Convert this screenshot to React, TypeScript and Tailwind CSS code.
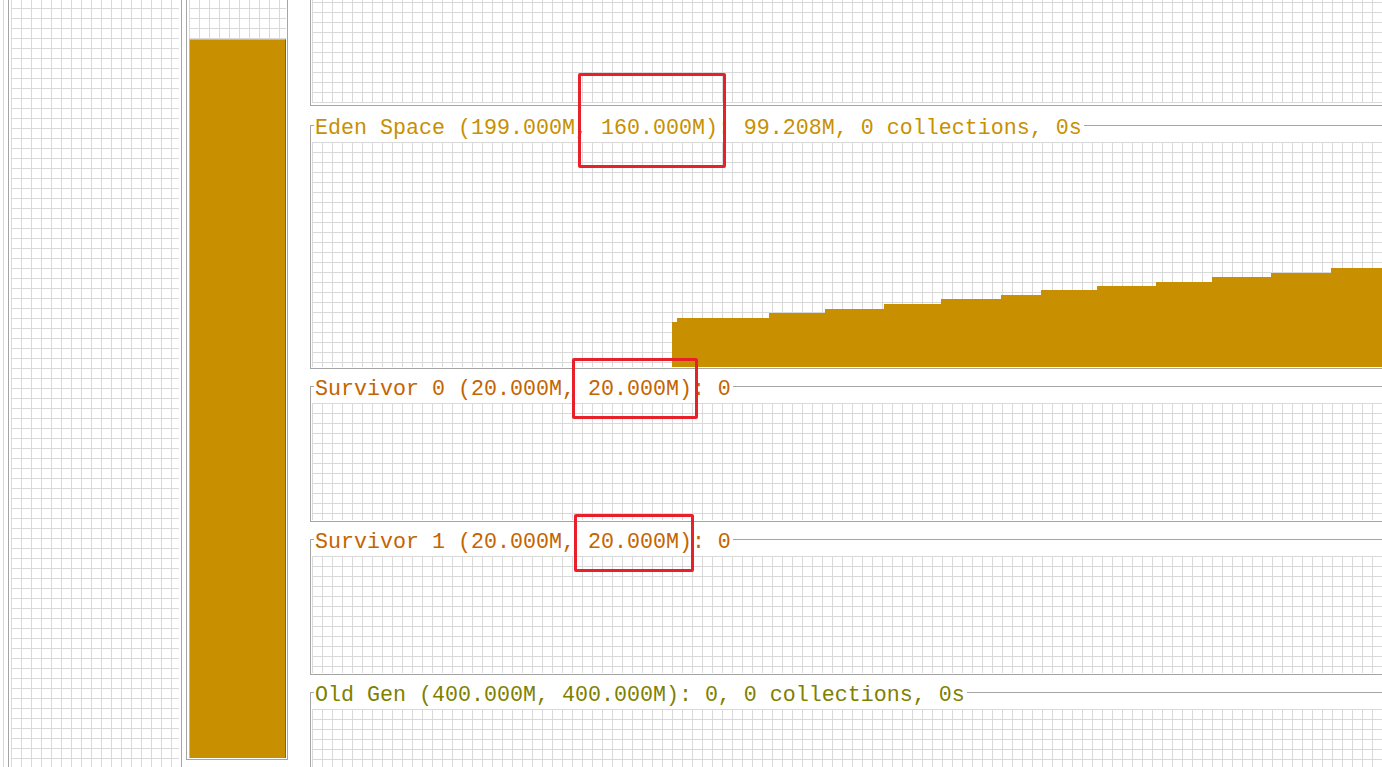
import React from "react";

/* grid backdrop shared by every chart area */
const GRID =
  "bg-[linear-gradient(to_right,#d9d9d9_1px,transparent_1px),linear-gradient(to_bottom,#d9d9d9_1px,transparent_1px)] bg-[size:10px_10px]";

const EDEN_POINTS =
  "360,225 360,180 365,180 365,176 457,176 457,171 513,171 513,167 572,167 572,162 629,162 629,157 689,157 689,153 729,153 729,148 785,148 785,144 844,144 844,140 900,140 900,135 959,135 959,131 1019,131 1019,126 1070,126 1070,225";

function Section({
  title,
  color,
  last,
  gridClass,
  children,
}: {
  title: string;
  color: string;
  last?: boolean;
  gridClass: string;
  children?: React.ReactNode;
}) {
  return (
    <div className={last ? "flex flex-col flex-1 min-h-0" : "flex flex-col"}>
      {/* titled border header */}
      <div className="flex h-[20px] shrink-0">
        <div className="w-[4px] h-[10px] self-end border-l border-t border-[#a5a5a5]" />
        <span
          className={`self-center mt-[7px] pl-[1px] leading-none whitespace-pre font-['Liberation_Mono',monospace] text-[21.667px] ${color}`}
        >
          {title}
        </span>
        <div className="self-center flex-1 h-px bg-[#a5a5a5] ml-[2px]" />
      </div>
      <div
        className={
          last
            ? "flex-1 min-h-0 border-l border-[#a5a5a5] pl-[1px] pt-[7px] flex flex-col"
            : "border-l border-b border-[#a5a5a5] pl-[1px] pt-[7px] pb-[1px]"
        }
      >
        <div className={`relative ${GRID} ${gridClass}`}>{children}</div>
      </div>
    </div>
  );
}

export default function App() {
  return (
    <div className="relative w-[1382px] h-[767px] overflow-hidden bg-white flex">
      {/* thin outer line */}
      <div className="ml-[3px] w-px h-full bg-[#d6d6d6]" />

      {/* left empty chart */}
      <div className="ml-[4px] w-[174px] h-full border-l border-r border-[#a5a5a5] px-[2px]">
        <div className={`h-full ${GRID} bg-[position:0_8px]`} />
      </div>

      {/* heap bar */}
      <div className="ml-[4px] w-[102px] h-[760px] border-l border-r border-b border-[#a5a5a5] pl-[2px] pr-[1px] pb-[1px]">
        <div className={`h-full flex flex-col justify-end ${GRID} bg-[position:0_8px]`}>
          <div className="h-[719px] bg-[#c89000] border-t border-l border-[#f2c200] border-r border-r-[#8c6500]" />
        </div>
      </div>

      {/* spaces */}
      <div className="ml-[22px] flex-1 h-full flex flex-col">
        <div className="h-[106px] shrink-0 border-l border-b border-[#a5a5a5] pl-[1px] pb-[2px]">
          <div className={`h-full ${GRID} bg-[position:0_2px]`} />
        </div>

        <div className="mt-[9px]">
          <Section
            title="Eden Space (199.000M, 160.000M): 99.208M, 0 collections, 0s"
            color="text-[#c89000]"
            gridClass="h-[225px]"
          >
            <svg className="absolute inset-0" width="1070" height="225" viewBox="0 0 1070 225">
              <polygon points={EDEN_POINTS} fill="#c89000" />
            </svg>
          </Section>
        </div>

        <div className="mt-[7px]">
          <Section title="Survivor 0 (20.000M, 20.000M): 0" color="text-[#c46400]" gridClass="h-[117px]" />
        </div>

        <div className="mt-[7px]">
          <Section title="Survivor 1 (20.000M, 20.000M): 0" color="text-[#c46400]" gridClass="h-[117px]" />
        </div>

        <div className="mt-[7px] flex-1 min-h-0 flex flex-col">
          <Section
            title="Old Gen (400.000M, 400.000M): 0, 0 collections, 0s"
            color="text-[#808000]"
            gridClass="flex-1"
            last
          />
        </div>
      </div>

      {/* red annotation boxes */}
      <div className="absolute left-[578px] top-[73px] w-[148px] h-[95px] border-[3px] border-[#e8202a] rounded-[2px]" />
      <div className="absolute left-[572px] top-[358px] w-[126px] h-[61px] border-[3px] border-[#e8202a] rounded-[2px]" />
      <div className="absolute left-[574px] top-[514px] w-[120px] h-[58px] border-[3px] border-[#e8202a] rounded-[2px]" />
    </div>
  );
}
